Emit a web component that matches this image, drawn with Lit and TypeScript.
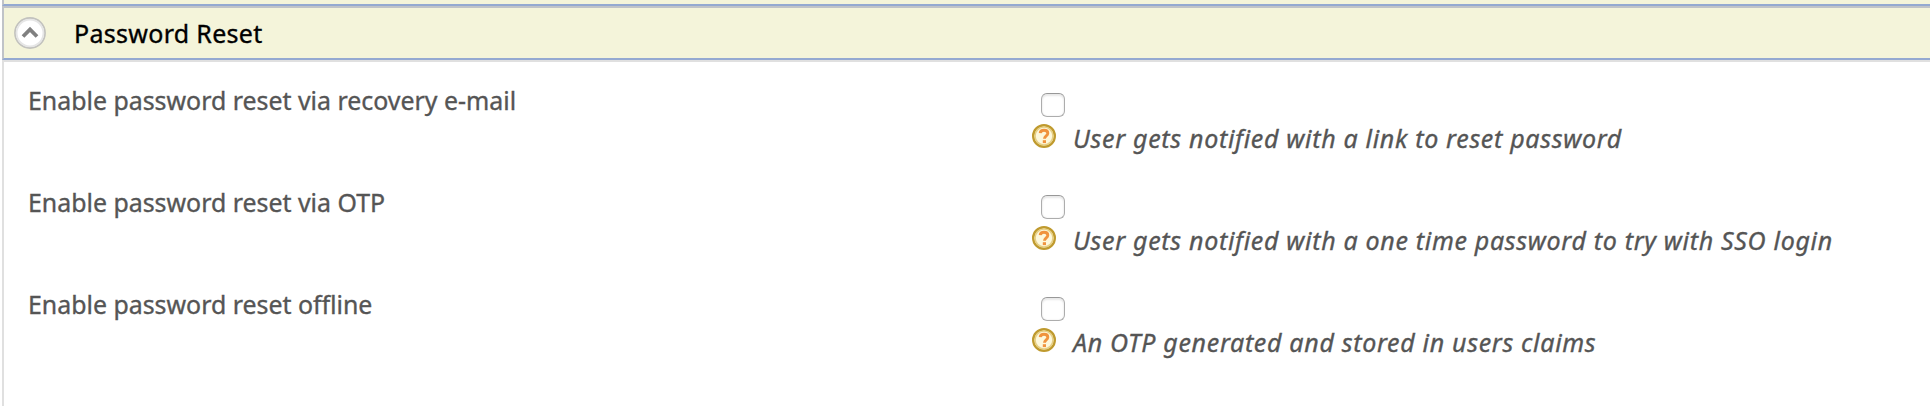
import { LitElement, html, css } from "lit";
import { customElement, property } from "lit/decorators.js";

@customElement("help-icon")
class HelpIcon extends LitElement {
  static styles = css`
    :host { display: block; width: 24px; height: 24px; flex: none; }
    svg { display: block; }
  `;
  render() {
    return html`<svg width="24" height="24" viewBox="0 0 24 24">
      <circle cx="12" cy="12" r="10.800" fill="#fdf8dc" stroke="#bf9a2e" stroke-width="2.400" />
      <circle cx="12" cy="12" r="9" fill="none" stroke="#e6cf85" stroke-width="1.600" />
      <path d="M8.200 9.200C8.400 7.200 9.900 6.300 12 6.300c2.300 0 3.800 1.100 3.800 3 0 2.700-3.300 2.600-3.300 5.500" fill="none" stroke="#f0933e" stroke-width="2.900" />
      <rect x="10.800" y="16.200" width="3.200" height="2.900" fill="#f0933e" />
    </svg>`;
  }
}

@customElement("option-row")
class OptionRow extends LitElement {
  @property() label = "";
  @property() hint = "";
  static styles = css`
    :host { display: grid; grid-template-columns: 1004px 1fr; height: 102px; color: #555; -webkit-text-stroke: 0.35px #555; }
    .label { font-size: 24.9px; line-height: 34px; padding-top: 3px; white-space: nowrap; }
    .control { padding-top: 13px; }
    .box {
      appearance: none; display: block; box-sizing: border-box;
      width: 24px; height: 24px; margin: 0 0 7px 9px;
      border: 1px solid #adadad; border-top-color: #989898; border-radius: 6px;
      background: #fff; box-shadow: inset 0 2px 2px #e8e8e8, inset 0 0 2px #e4e4e4;
    }
    .help { display: flex; }
    .hint { font-size: 25px; line-height: 28px; letter-spacing: 0.68px; font-style: italic; margin-left: 17px; white-space: nowrap; }
  `;
  render() {
    return html`<div class="label">${this.label}</div>
      <div class="control">
        <input class="box" type="checkbox" aria-label=${this.label} />
        <div class="help"><help-icon></help-icon><span class="hint">${this.hint}</span></div>
      </div>`;
  }
}

@customElement("app-root")
class AppRoot extends LitElement {
  static styles = css`
    :host { display: block; height: 406px; overflow: hidden; background: #fff; padding-left: 2px; box-sizing: border-box; font-family: "Noto Sans", sans-serif; }
    .previous { height: 4px; background: #f4f4da; border-left: 2px solid #c0c3c8; border-bottom: 2px solid #94a9d1; }
    .header { display: flex; align-items: center; height: 50px; background: #f4f4da; border-left: 2px solid #c0c3c8; border-top: 2px solid #c0c3c8; border-bottom: 2px solid #94a9d1; }
    .toggle { display: block; margin-left: 10px; }
    .title { margin: 0 0 0 28px; font-size: 25px; font-weight: 400; line-height: 34px; color: #000; letter-spacing: 0.3px; -webkit-text-stroke: 0.35px #000; }
    .body { border-left: 2px solid #e0e0e0; border-top: 2px solid #e0e0e0; height: 344px; padding: 18px 0 0 24px; box-sizing: content-box; }
  `;
  rows = [
    ["Enable password reset via recovery e-mail", "User gets notified with a link to reset password"],
    ["Enable password reset via OTP", "User gets notified with a one time password to try with SSO login"],
    ["Enable password reset offline", "An OTP generated and stored in users claims"],
  ];
  render() {
    return html`
      <div class="previous"></div>
      <div class="header">
        <svg class="toggle" width="32" height="32" viewBox="0 0 32 32">
          <circle cx="16" cy="16" r="15" fill="#fff" stroke="#c2c2be" stroke-width="1.800" />
          <circle cx="16" cy="16" r="13.400" fill="none" stroke="#e6e6e6" stroke-width="1.800" />
          <path d="M9 19.500l7-7 7 7" fill="none" stroke="#808080" stroke-width="3.800" />
        </svg>
        <h2 class="title">Password Reset</h2>
      </div>
      <div class="body">
        ${this.rows.map(([label, hint]) => html`<option-row .label=${label} .hint=${hint}></option-row>`)}
      </div>`;
  }
}
